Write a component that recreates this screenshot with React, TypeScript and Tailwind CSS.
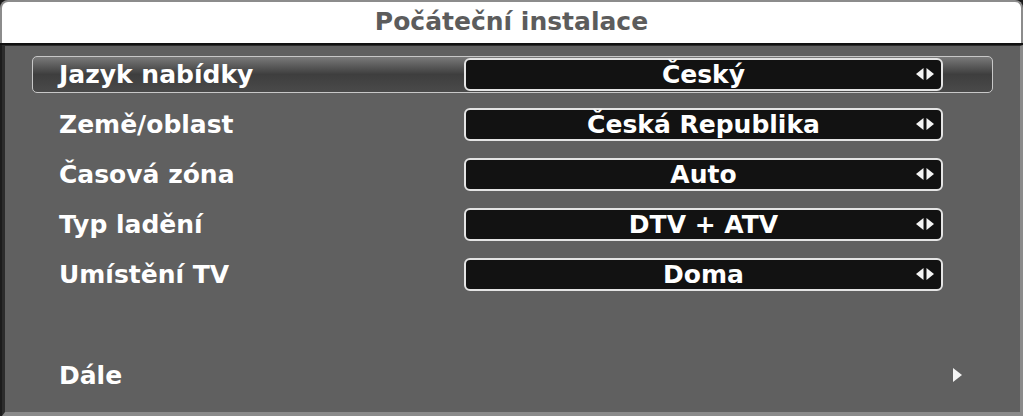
import React from 'react';

type Row = { label: string; value: string };

const rows: Row[] = [
  { label: 'Jazyk nabídky', value: 'Český' },
  { label: 'Země/oblast', value: 'Česká Republika' },
  { label: 'Časová zóna', value: 'Auto' },
  { label: 'Typ ladění', value: 'DTV + ATV' },
  { label: 'Umístění TV', value: 'Doma' },
];

function LeftRight() {
  return (
    <svg width="20" height="12" viewBox="0 0 20 12" className="absolute right-[6px] top-1/2 -translate-y-1/2">
      <polygon points="8.5,0 8.5,12 1,6" fill="#f4f4f4" />
      <polygon points="11.5,0 11.5,12 19,6" fill="#f4f4f4" />
    </svg>
  );
}

function SettingRow({ row, selected }: { row: Row; selected: boolean }) {
  return (
    <div className="h-[50px] flex items-center">
      <div
        className={
          selected
            ? 'w-[961px] h-[37px] flex items-center pl-[26px] rounded-[5px] border border-[#c8c8c8] bg-gradient-to-b from-[#7a7a7a] via-[#3e3e3e] to-[#4a4a4a]'
            : 'w-[961px] h-[37px] flex items-center pl-[26px] rounded-[5px] border border-transparent'
        }
      >
        <div className="w-[405px] text-white text-[25px] font-bold leading-none">{row.label}</div>
        <div className="relative w-[479px] h-[33px] rounded-[6px] border-2 border-[#e4e4e4] bg-[#121212] flex items-center justify-center">
          <span className="text-white text-[25px] font-bold leading-none">{row.value}</span>
          <LeftRight />
        </div>
      </div>
    </div>
  );
}

export default function App() {
  return (
    <div
      className="w-[1023px] h-[416px] bg-[#1c1c1c] flex flex-col overflow-hidden"
      style={{ fontFamily: '"DejaVu Sans", Verdana, sans-serif' }}
    >
      <div className="h-[43px] shrink-0 bg-white border-2 border-b-0 border-[#8c8c8c] rounded-t-[8px] flex items-center justify-center pb-[2px]">
        <span className="text-[#5c5c5c] text-[25px] font-bold leading-none">Počáteční instalace</span>
      </div>
      <div className="h-[2px] bg-[#111]" />
      <div className="flex-1 ml-[2px] bg-[#606060] border-l-[3px] border-t border-[#2c2c2c] border-r-[3px] border-r-[#8a8a8a] border-b-[4px] border-b-[#8a8a8a] pl-[27px] pt-[3px]">
        {rows.map((r, i) => (
          <SettingRow key={r.label} row={r} selected={i === 0} />
        ))}
        <div className="h-[51px]" />
        <div className="h-[50px] flex items-center pl-[27px]">
          <div className="w-[894px] text-white text-[25px] font-bold leading-none">Dále</div>
          <svg width="10" height="14" viewBox="0 0 10 14">
            <polygon points="0,0 0,14 9,7" fill="#f4f4f4" />
          </svg>
        </div>
      </div>
    </div>
  );
}
